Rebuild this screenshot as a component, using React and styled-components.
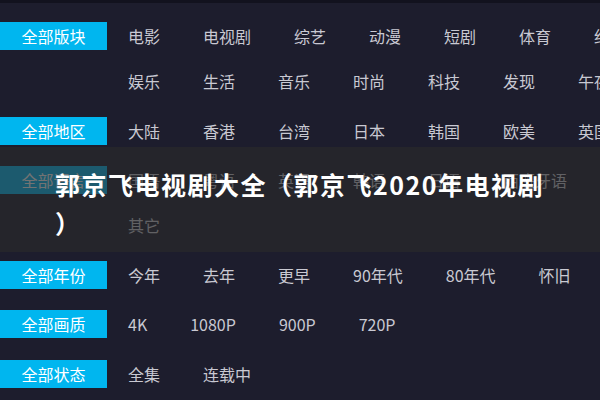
import React from "react";
import styled, { createGlobalStyle } from "styled-components";

const GlobalStyle = createGlobalStyle`
  html, body {
    margin: 0;
    padding: 0;
    background: #1d1d2d;
    overflow: hidden;
  }
  body {
    font-family: "Noto Sans CJK SC", "Noto Sans", sans-serif;
  }
`;

const groups = [
  {
    label: "全部版块",
    rows: [
      ["电影", "电视剧", "综艺", "动漫", "短剧", "体育", "纪录片"],
      ["娱乐", "生活", "音乐", "时尚", "科技", "发现", "午夜"],
    ],
  },
  { label: "全部地区", rows: [["大陆", "香港", "台湾", "日本", "韩国", "欧美", "英国"]] },
  {
    label: "全部语言",
    rows: [
      ["国语", "粤语", "英语", "韩语", "日语", "西班牙语"],
      ["其它"],
    ],
  },
  { label: "全部年份", rows: [["今年", "去年", "更早", "90年代", "80年代", "怀旧"]] },
  { label: "全部画质", rows: [["4K", "1080P", "900P", "720P"]] },
  { label: "全部状态", rows: [["全集", "连载中"]] },
];

export default function App() {
  return (
    <>
      <GlobalStyle />
      <Page>
        <Filters>
          {groups.map((g) => (
            <Group key={g.label}>
              <Label>{g.label}</Label>
              <Rows>
                {g.rows.map((row, i) => (
                  <Row key={i}>
                    {row.map((item) => (
                      <Item key={item}>{item}</Item>
                    ))}
                  </Row>
                ))}
              </Rows>
            </Group>
          ))}
        </Filters>
        <Banner>
          <Title>郭京飞电视剧大全（郭京飞2020年电视剧）</Title>
        </Banner>
      </Page>
    </>
  );
}

const Page = styled.div`
  position: relative;
  width: 600px;
  height: 400px;
  overflow: hidden;
  border-top: 3px solid #12121e;
  box-sizing: border-box;
`;

const Filters = styled.div`
  display: flex;
  flex-direction: column;
  gap: 21.5px;
  padding-top: 19px;
`;

const Group = styled.div`
  display: flex;
  align-items: flex-start;
`;

const Label = styled.div`
  flex: none;
  width: 107px;
  height: 28px;
  line-height: 28px;
  background: #00b6ef;
  color: #ffffff;
  font-size: 16px;
  text-align: center;
`;

const Rows = styled.div`
  display: flex;
  flex-direction: column;
  gap: 17px;
`;

const Row = styled.div`
  display: flex;
  flex-wrap: nowrap;
  white-space: nowrap;
  padding-left: 21px;
  height: 28px;
  align-items: center;
`;

const Item = styled.span`
  margin-right: 43px;
  font-size: 16px;
  color: #c9c9d2;
`;

const Banner = styled.div`
  position: absolute;
  left: 0;
  right: 0;
  top: 144px;
  height: 105px;
  background: rgba(42, 42, 42, 0.66);
  box-sizing: border-box;
  padding: 18px 45px 0 55px;
`;

const Title = styled.div`
  color: #ffffff;
  font-size: 25px;
  font-weight: 700;
  letter-spacing: 1.5px;
  line-height: 39px;
  line-break: anywhere;
`;
